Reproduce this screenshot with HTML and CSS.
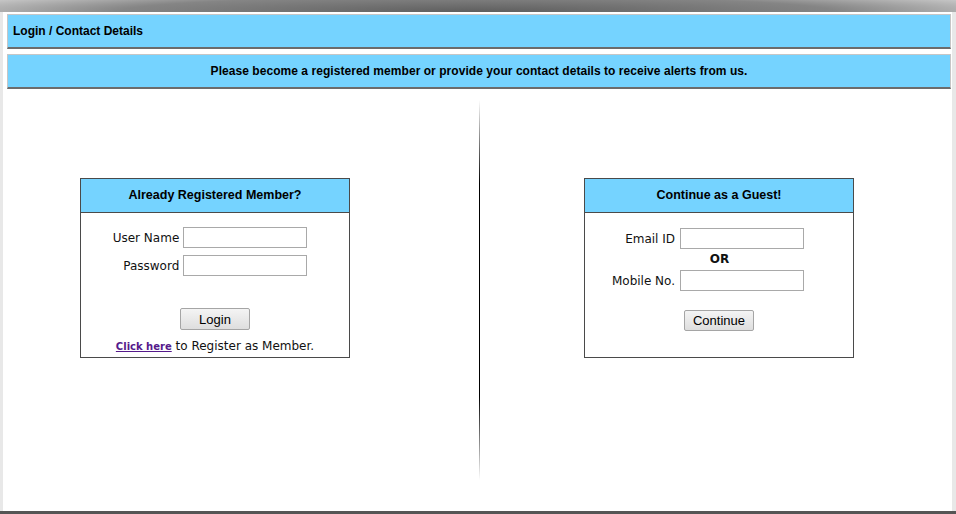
FILE: index.html
```html
<!DOCTYPE html>
<html lang="en">
<head>
    <meta charset="UTF-8">
    <meta name="viewport" content="width=device-width, initial-scale=1.0">
    <title>Login / Contact Details</title>
    <link rel="stylesheet" href="styles.css">
</head>
<body>
    <div class="top-shade"></div>

    <div class="page">
        <div class="title-bar">Login / Contact Details</div>
        <div class="title-bar notice">Please become a registered member or provide your contact details to receive alerts from us.</div>

        <div class="content">
            <div class="column left-col">
                <div class="box">
                    <div class="box-head">Already Registered Member?</div>
                    <form class="box-body login-body">
                        <div class="field-grid">
                            <label for="username">User Name</label>
                            <input type="text" id="username">
                            <label for="password">Password</label>
                            <input type="password" id="password">
                        </div>
                        <button type="button" class="btn login-btn">Login</button>
                        <p class="register"><a href="#">Click here</a> to Register as Member.</p>
                    </form>
                </div>
            </div>

            <div class="divider"></div>

            <div class="column right-col">
                <div class="box">
                    <div class="box-head">Continue as a Guest!</div>
                    <form class="box-body guest-body">
                        <div class="field-grid">
                            <label for="email">Email ID</label>
                            <input type="text" id="email">
                            <span class="or">OR</span>
                            <label for="mobile">Mobile No.</label>
                            <input type="text" id="mobile">
                        </div>
                        <button type="button" class="btn continue-btn">Continue</button>
                    </form>
                </div>
            </div>
        </div>
    </div>

    <div class="bottom-bar"></div>
</body>
</html>
```

FILE: styles.css
```css
body {
    margin: 0;
    padding: 0;
    background-color: #e8e8e8;
    font-family: "DejaVu Sans", Verdana, sans-serif;
    color: #111;
}
.top-shade {
    height: 12px;
    background: radial-gradient(ellipse 75% 260% at 50% 100%, #5e5e5e 0%, #858585 50%, #e6e6e6 90%);
}
.page {
    background-color: white;
    margin: 0 4px 0 3px;
    padding: 2px 1px 0 4px;
    height: 497px;
    display: flex;
    flex-direction: column;
}
.title-bar {
    background-color: #75d3ff;
    border: 1px solid #c6c6c6;
    border-bottom: 2px solid #6c6c6c;
    height: 32px;
    line-height: 32px;
    padding-left: 5px;
    font-family: "Liberation Sans", Arial, sans-serif;
    font-weight: bold;
    font-size: 12px;
    color: #000;
}
.notice {
    margin-top: 5px;
    text-align: center;
    padding-left: 0;
    letter-spacing: 0.05px;
}
.content {
    flex: 1;
    display: flex;
}
.column {
    display: flex;
    padding-top: 89px;
}
.left-col {
    width: 399px;
    padding-left: 73px;
}
.right-col {
    flex: 1;
    padding-left: 104px;
}
.divider {
    width: 1px;
    margin: 11px 0 31px;
    background: linear-gradient(to bottom, rgba(0,0,0,0), #000 22%, #000 78%, rgba(0,0,0,0));
}
.box {
    width: 268px;
    height: 178px;
    border: 1px solid #4a4a4a;
    display: flex;
    flex-direction: column;
}
.box-head {
    background-color: #75d3ff;
    border-bottom: 1px solid #4a4a4a;
    height: 33px;
    line-height: 33px;
    text-align: center;
    font-family: "Liberation Sans", Arial, sans-serif;
    font-weight: bold;
    font-size: 12.5px;
    color: #000;
}
.box-body {
    margin: 0;
    display: flex;
    flex-direction: column;
    align-items: center;
}
.field-grid {
    display: grid;
    grid-template-columns: auto 124px;
    column-gap: 4px;
    row-gap: 7px;
    align-items: center;
}
.field-grid label {
    font-size: 12px;
    text-align: right;
}
input {
    width: 124px;
    height: 21px;
    box-sizing: border-box;
    border: 1px solid #a9a9a9;
    padding: 1px 3px;
    margin: 0;
    font-size: 12px;
}
.login-body {
    padding-top: 14px;
}
.login-body .field-grid {
    margin-left: -10px;
}
.guest-body {
    padding-top: 15px;
}
.guest-body .field-grid {
    row-gap: 0;
    column-gap: 5px;
    margin-left: -22px;
}
.or {
    grid-column: 1 / 3;
    text-align: center;
    font-weight: bold;
    font-size: 12px;
    line-height: 21px;
    margin-left: 23px;
}
.btn {
    width: 70px;
    height: 22px;
    font-family: "Liberation Sans", Arial, sans-serif;
    font-size: 13px;
    color: #000;
    background: linear-gradient(to bottom, #f4f4f4, #dedede);
    border: 1px solid #a5a5a5;
    border-radius: 2px;
    padding: 0;
}
.login-btn {
    margin-top: 32px;
}
.continue-btn {
    margin-top: 19px;
    height: 21px;
}
.register {
    margin: 9px 0 0;
    font-size: 12px;
}
.register a {
    color: #551a8b;
    font-size: 10px;
    font-weight: bold;
}
.bottom-bar {
    height: 3px;
    background-color: #555;
}
```
